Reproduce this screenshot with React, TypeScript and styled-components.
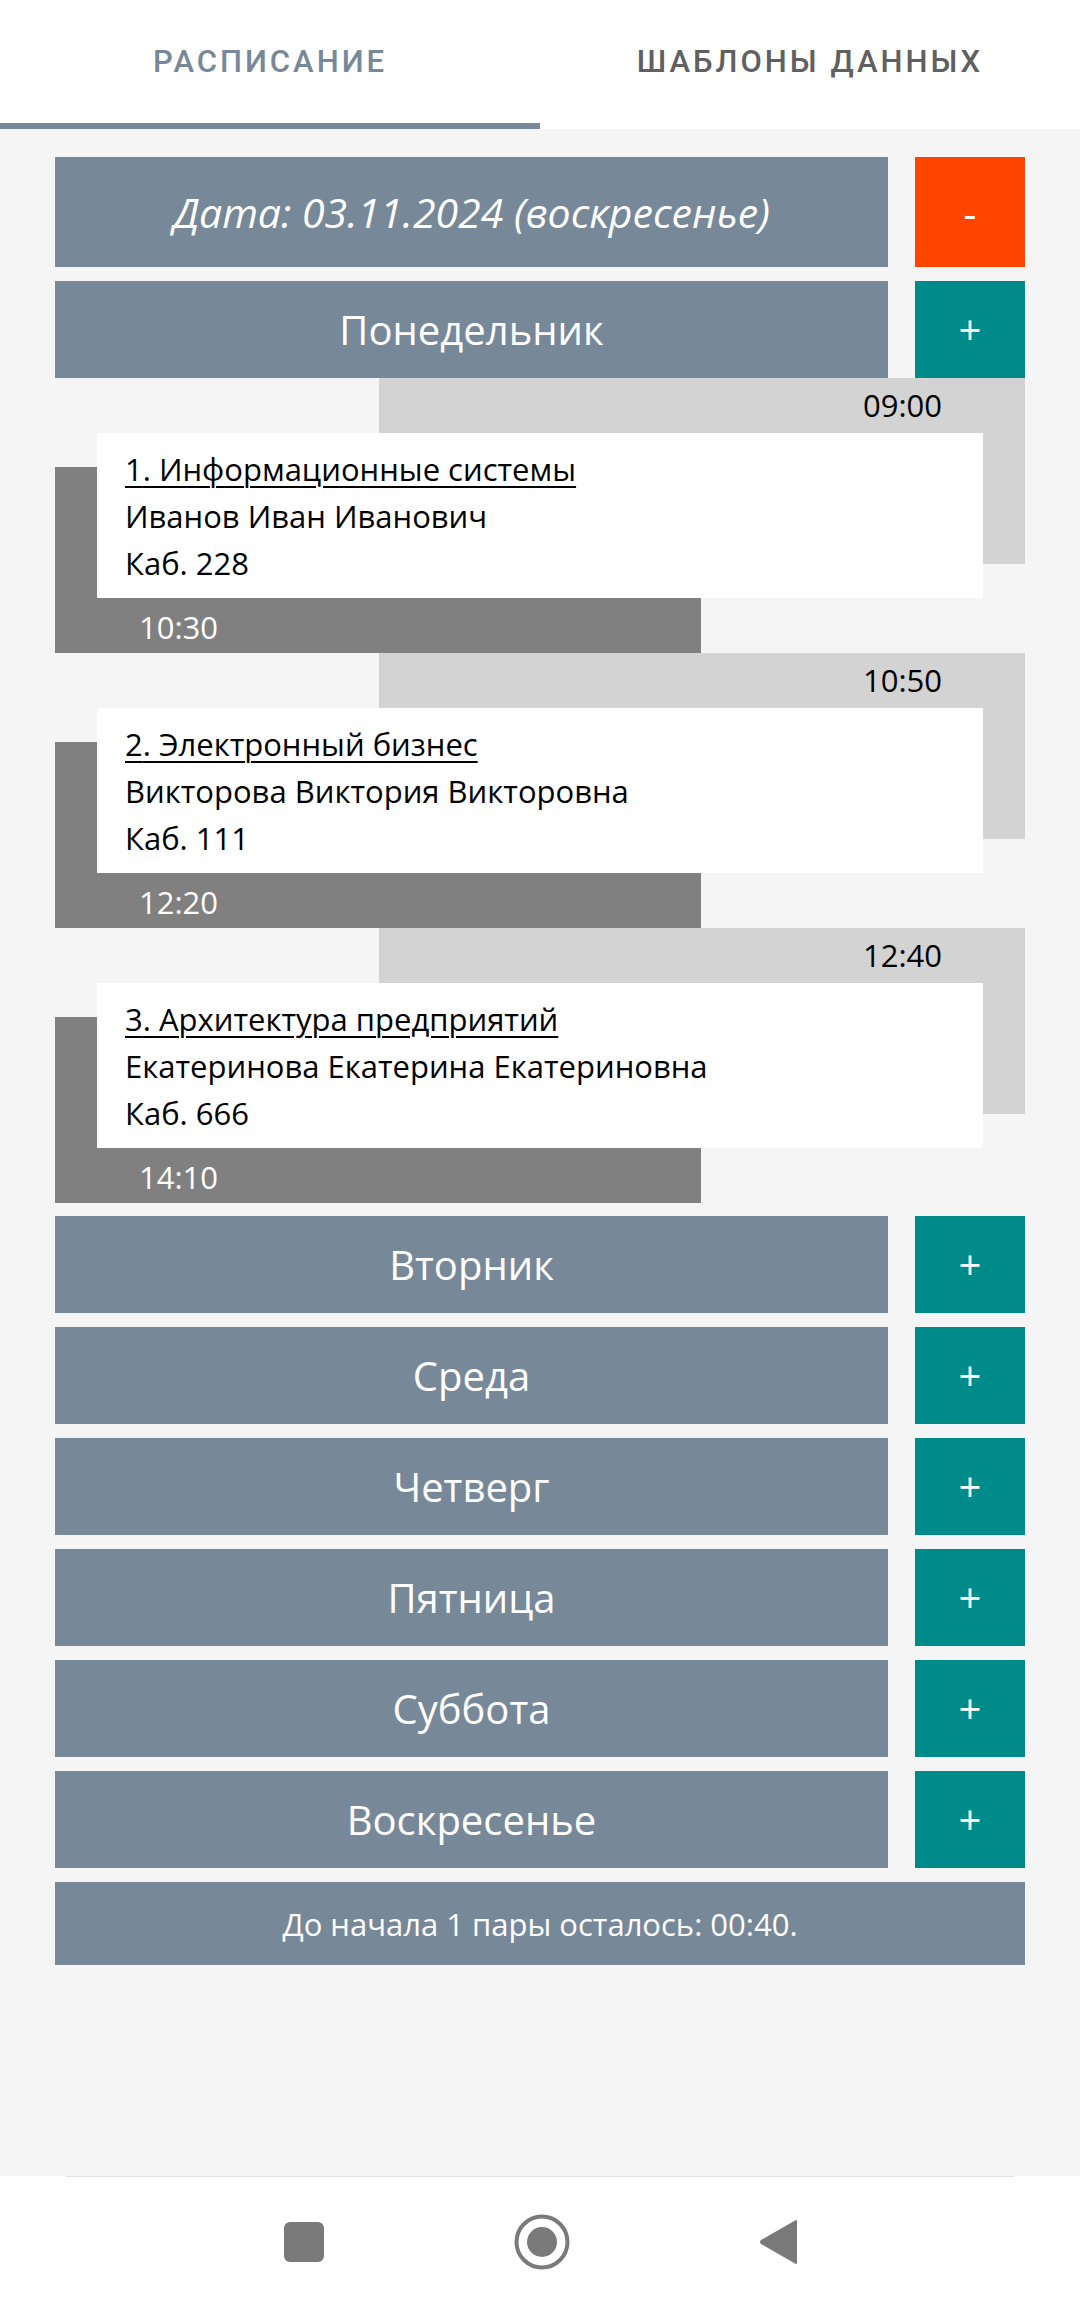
import React from 'react';
import styled, { createGlobalStyle } from 'styled-components';

const GlobalStyle = createGlobalStyle`
  html, body {
    margin: 0;
    padding: 0;
    background: #f5f5f5;
  }
  #root {
    min-height: 100vh;
    display: flex;
    flex-direction: column;
  }
`;

interface LessonData {
  num: number;
  title: string;
  teacher: string;
  room: string;
  start: string;
  end: string;
}

const lessons: LessonData[] = [
  { num: 1, title: 'Информационные системы', teacher: 'Иванов Иван Иванович', room: '228', start: '09:00', end: '10:30' },
  { num: 2, title: 'Электронный бизнес', teacher: 'Викторова Виктория Викторовна', room: '111', start: '10:50', end: '12:20' },
  { num: 3, title: 'Архитектура предприятий', teacher: 'Екатеринова Екатерина Екатериновна', room: '666', start: '12:40', end: '14:10' },
];

const otherDays = ['Вторник', 'Среда', 'Четверг', 'Пятница', 'Суббота', 'Воскресенье'];

const Page = styled.div`
  flex: 1;
  display: flex;
  flex-direction: column;
  width: 1080px;
  min-height: 2306px;
  font-family: 'Open Sans', 'Noto Sans', sans-serif;
`;

// Верхние вкладки
const Tabs = styled.div`
  display: flex;
  background: #fff;
`;

const Tab = styled.div<{ $active?: boolean }>`
  width: 540px;
  height: 123px;
  display: flex;
  align-items: center;
  justify-content: center;
  font-family: Roboto, 'Noto Sans', sans-serif;
  font-weight: 500;
  font-size: 31px;
  letter-spacing: 3px;
  color: ${p => (p.$active ? '#778899' : '#606060')};
  border-bottom: 6px solid ${p => (p.$active ? '#778899' : '#fff')};
`;

const Content = styled.div`
  flex: 1;
  display: flex;
  flex-direction: column;
  padding: 28px 55px 0;
  background: #f5f5f5;
`;

const Row = styled.div<{ $tall?: boolean; $gap?: number }>`
  display: flex;
  gap: 27px;
  height: ${p => (p.$tall ? 110 : 97)}px;
  margin-top: ${p => p.$gap ?? 14}px;
`;

const DayBar = styled.div<{ $italic?: boolean }>`
  flex: 1;
  background: #778899;
  color: #fff;
  display: flex;
  align-items: center;
  justify-content: center;
  font-size: ${p => (p.$italic ? 41 : 40)}px;
  font-style: ${p => (p.$italic ? 'italic' : 'normal')};
`;

const SquareButton = styled.div<{ $danger?: boolean }>`
  width: 110px;
  background: ${p => (p.$danger ? '#ff4500' : '#008b8b')};
  color: #fff;
  display: flex;
  align-items: center;
  justify-content: center;
  font-size: 40px;
`;

// Пара: три перекрывающихся слоя в одной сетке
const Lesson = styled.div`
  display: grid;
  grid-template-columns: 42px 282px 322px 282px 42px;
  grid-template-rows: 55px 34px 97px 34px 55px;
`;

const StartLayer = styled.div`
  grid-column: 3 / 6;
  grid-row: 1 / 4;
  background: #d3d3d3;
`;

const EndLayer = styled.div`
  grid-column: 1 / 4;
  grid-row: 3 / 6;
  background: #808080;
`;

const Card = styled.div`
  grid-column: 2 / 5;
  grid-row: 2 / 5;
  background: #fff;
  padding: 13px 28px 11px;
  font-size: 31px;
  line-height: 47px;
  color: #000;
  z-index: 1;
`;

const Title = styled.div`
  text-decoration: underline;
  text-underline-offset: 5px;
  text-decoration-thickness: 2px;
`;

const Time = styled.div<{ $end?: boolean }>`
  grid-column: ${p => (p.$end ? '1 / 4' : '3 / 6')};
  grid-row: ${p => (p.$end ? '5 / 6' : '1 / 2')};
  font-size: 31px;
  line-height: 55px;
  text-align: ${p => (p.$end ? 'left' : 'right')};
  padding: ${p => (p.$end ? '2px 0 0 84px' : '0 83px 0 0')};
  color: ${p => (p.$end ? '#fff' : '#000')};
  z-index: 1;
`;

const Footer = styled.div`
  margin-top: 14px;
  height: 83px;
  background: #778899;
  color: #fff;
  display: flex;
  align-items: center;
  justify-content: center;
  font-size: 31px;
`;

// Системная навигация
const NavBar = styled.div`
  height: 130px;
  background: #fff;
  display: flex;
  flex-direction: column;
`;

const NavLine = styled.div`
  margin: 0 66px;
  height: 1px;
  background: #e2e2e2;
`;

const NavIcons = styled.div`
  flex: 1;
  display: flex;
  align-items: center;
  justify-content: center;
  gap: 190px;
`;

const LessonBlock: React.FC<{ lesson: LessonData }> = ({ lesson }) => (
  <Lesson>
    <StartLayer />
    <EndLayer />
    <Card>
      <Title>{lesson.num}. {lesson.title}</Title>
      <div>{lesson.teacher}</div>
      <div>Каб. {lesson.room}</div>
    </Card>
    <Time>{lesson.start}</Time>
    <Time $end>{lesson.end}</Time>
  </Lesson>
);

export default function App() {
  return (
    <Page>
      <GlobalStyle />
      <Tabs>
        <Tab $active>РАСПИСАНИЕ</Tab>
        <Tab>ШАБЛОНЫ ДАННЫХ</Tab>
      </Tabs>
      <Content>
        <Row $tall $gap={0}>
          <DayBar $italic>Дата: 03.11.2024 (воскресенье)</DayBar>
          <SquareButton $danger>-</SquareButton>
        </Row>
        <Row>
          <DayBar>Понедельник</DayBar>
          <SquareButton>+</SquareButton>
        </Row>
        {lessons.map(l => (
          <LessonBlock key={l.num} lesson={l} />
        ))}
        {otherDays.map((d, i) => (
          <Row key={d} $gap={i === 0 ? 13 : 14}>
            <DayBar>{d}</DayBar>
            <SquareButton>+</SquareButton>
          </Row>
        ))}
        <Footer>До начала 1 пары осталось: 00:40.</Footer>
      </Content>
      <NavBar>
        <NavLine />
        <NavIcons>
          <svg width="40" height="40" viewBox="0 0 40 40">
            <rect x="0" y="0" width="40" height="40" rx="6" fill="#7a7a7a" />
          </svg>
          <svg width="56" height="56" viewBox="0 0 56 56">
            <circle cx="28" cy="28" r="25.5" fill="none" stroke="#7a7a7a" strokeWidth="4" />
            <circle cx="28" cy="28" r="15" fill="#7a7a7a" />
          </svg>
          <svg width="37" height="46" viewBox="0 0 37 46">
            <path d="M35 1.5 C36 0.5 37 1 37 2.5 L37 43.5 C37 45 36 45.5 35 44.5 L1 25 C-0.3 24 -0.3 22 1 21 Z" fill="#7a7a7a" />
          </svg>
        </NavIcons>
      </NavBar>
    </Page>
  );
}
